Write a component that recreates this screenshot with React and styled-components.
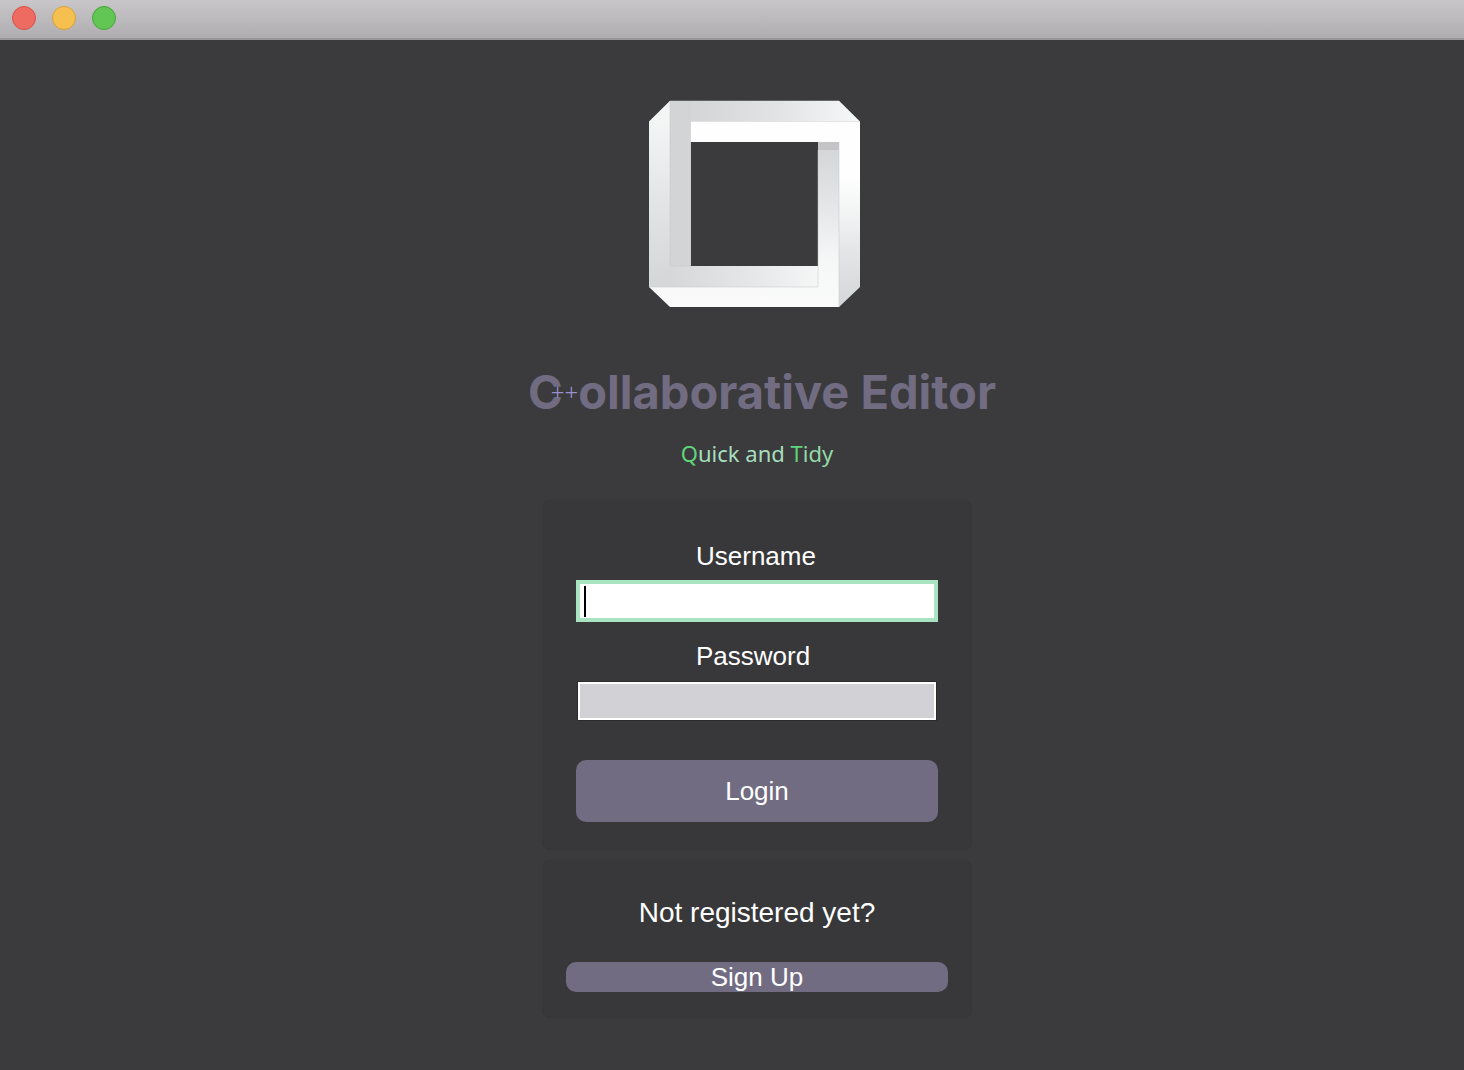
import React from "react";
import styled, { createGlobalStyle } from "styled-components";

const GlobalStyle = createGlobalStyle`
  *, *::before, *::after { box-sizing: border-box; }
  body {
    margin: 0;
    background: #3b3b3d;
    color: #ffffff;
    font-family: "Liberation Sans", Arial, sans-serif;
  }
`;

const Window = styled.div`
  min-height: 100vh;
  display: flex;
  flex-direction: column;
`;

const TitleBar = styled.header`
  display: flex;
  align-items: flex-start;
  gap: 16px;
  height: 40px;
  padding: 6px 12px;
  background: linear-gradient(#c8c6c9, #afadb0);
  border-bottom: 2px solid #98969a;
`;

const WindowButton = styled.button`
  width: 24px;
  height: 24px;
  padding: 0;
  border: 1px solid ${(p) => p.$edge};
  border-radius: 50%;
  background: ${(p) => p.$fill};
`;

const Main = styled.main`
  flex: 1;
  display: flex;
  flex-direction: column;
  align-items: center;
  padding: 60px 0 50px 50px;
`;

const Logo = styled.svg`
  display: block;
  width: 212px;
  height: 208px;
  margin-right: 4px;
`;

const Title = styled.h1`
  display: flex;
  align-items: center;
  margin: 56px 0 0 10px;
  color: #716c82;
  font: 700 47px/56px Inter, sans-serif;
  white-space: nowrap;
`;

const PlusPlus = styled.span`
  margin: 0 0 0 -12px;
  color: #9a8fd0;
  font: 300 24px/56px "Noto Sans", sans-serif;
`;

const Tagline = styled.p`
  margin: 17px 0 31px;
  color: ${(p) => p.$color};
  font: 400 22px/32px "Noto Sans", sans-serif;
`;

const Tint = styled.span`
  color: ${(p) => p.$color};
`;

const Card = styled.section`
  width: 430px;
  max-width: 100%;
  padding: ${(p) => p.$padding};
  border: 1px solid #373738;
  border-radius: 8px;
  background: #38383a;
`;

const LoginForm = styled.form`
  display: flex;
  flex-direction: column;
  gap: 18px;
`;

const Field = styled.div`
  display: flex;
  flex-direction: column;
  gap: 8px;
`;

const Label = styled.label`
  padding-left: 120px;
  font-size: 26px;
  line-height: 32px;
`;

const TextInput = styled.input`
  height: 38px;
  margin: 2px;
  padding: 0 6px;
  border: 2px solid #ffffff;
  border-radius: 0;
  outline: 1px solid #2c2c2d;
  background: #d2d1d6;
  color: #000000;
  font: 26px "Liberation Sans", Arial, sans-serif;

  &:focus {
    height: 42px;
    margin: 0;
    padding: 0 4px;
    border: 4px solid #a9e3c2;
    outline: none;
    caret-color: transparent;
    background: #ffffff linear-gradient(#000000, #000000) 4px 2px / 2px 31px no-repeat;
  }
`;

const Button = styled.button`
  display: block;
  width: 100%;
  height: ${(p) => p.$height};
  margin-top: ${(p) => p.$gap};
  padding: 0;
  border: 0;
  border-radius: 10px;
  background: #716c82;
  color: #ffffff;
  font: 26px/30px "Liberation Sans", Arial, sans-serif;
`;

const Cards = styled.div`
  display: flex;
  flex-direction: column;
  align-items: center;
  gap: 10px;
  width: 100%;
`;

const Prompt = styled.p`
  margin: 0;
  font-size: 28px;
  line-height: 32px;
  text-align: center;
`;

function FrameLogo() {
  return (
    <Logo viewBox="0 0 212 208" role="img" aria-label="Collaborative Editor logo">
      <defs>
        <linearGradient id="left" gradientUnits="userSpaceOnUse" x1="21" y1="20" x2="10" y2="186">
          <stop offset="0" stopColor="#f4f5f5" />
          <stop offset="0.5" stopColor="#e3e4e6" />
          <stop offset="1" stopColor="#d5d6d8" />
        </linearGradient>
        <linearGradient id="foot" gradientUnits="userSpaceOnUse" x1="22" y1="186" x2="169" y2="166">
          <stop offset="0" stopColor="#d6d7d9" />
          <stop offset="0.55" stopColor="#e6e7e8" />
          <stop offset="1" stopColor="#f5f6f6" />
        </linearGradient>
        <linearGradient id="top" gradientUnits="userSpaceOnUse" x1="50" y1="0" x2="205" y2="0">
          <stop offset="0" stopColor="#d5d6d8" />
          <stop offset="0.5" stopColor="#e2e3e5" />
          <stop offset="1" stopColor="#f5f6f6" />
        </linearGradient>
        <linearGradient id="right" x1="0" y1="0" x2="0" y2="1">
          <stop offset="0.3" stopColor="#fefefe" />
          <stop offset="0.5" stopColor="#f2f3f3" />
          <stop offset="0.7" stopColor="#e4e5e7" />
          <stop offset="1" stopColor="#d5d6d8" />
        </linearGradient>
        <linearGradient id="inner" x1="0" y1="0" x2="0" y2="1">
          <stop offset="0" stopColor="#d3d4d6" />
          <stop offset="0.35" stopColor="#e3e4e6" />
          <stop offset="0.7" stopColor="#f5f6f6" />
          <stop offset="1" stopColor="#fbfbfb" />
        </linearGradient>
      </defs>
      <path d="M0 21.5 21 .7V166H42V187H0Z" fill="url(#left)" />
      <path d="M21 166H169V187H0Z" fill="url(#foot)" />
      <path d="M21 .7H42V166H21Z" fill="#d3d4d6" />
      <path d="M42 .7H190L211 21.5H42Z" fill="url(#top)" />
      <path d="M169 42H190V207H21L0 187H169Z" fill="url(#inner)" />
      <path d="M169 42H190V50H169Z" fill="#c4c4c6" />
      <path d="M41.5 21.2H211V187L190 207V42H41.5Z" fill="url(#right)" />
      <path d="M190 42V207M169 50V187H0M21 1V166H41.5V21" fill="none" stroke="#c4c5c8" strokeWidth="0.5" />
    </Logo>
  );
}

export default function App() {
  return (
    <>
      <GlobalStyle />
      <Window>
        <TitleBar>
          <WindowButton aria-label="Close" $fill="#ed6b60" $edge="#d8504a" />
          <WindowButton aria-label="Minimize" $fill="#f5c04f" $edge="#d8a03c" />
          <WindowButton aria-label="Zoom" $fill="#62c655" $edge="#47a53a" />
        </TitleBar>
        <Main>
          <FrameLogo />
          <Title>
            C<PlusPlus>++</PlusPlus>ollaborative Editor
          </Title>
          <Tagline $color="#a6dfbf">
            <Tint $color="#5fd67b">Q</Tint>uick and <Tint $color="#5fd67b">T</Tint>
            <Tint $color="#92d9a6">idy</Tint>
          </Tagline>
          <Cards>
            <Card $padding="39px 33px 27px">
              <LoginForm onSubmit={(e) => e.preventDefault()}>
                <Field>
                  <Label htmlFor="username">Username</Label>
                  <TextInput id="username" type="text" autoFocus />
                </Field>
                <Field>
                  <Label htmlFor="password">Password</Label>
                  <TextInput id="password" type="password" />
                </Field>
                <Button type="submit" $height="62px" $gap="20px">Login</Button>
              </LoginForm>
            </Card>
            <Card $padding="36px 23px 25px">
              <Prompt>Not registered yet?</Prompt>
              <Button type="button" $height="30px" $gap="33px">Sign Up</Button>
            </Card>
          </Cards>
        </Main>
      </Window>
    </>
  );
}
